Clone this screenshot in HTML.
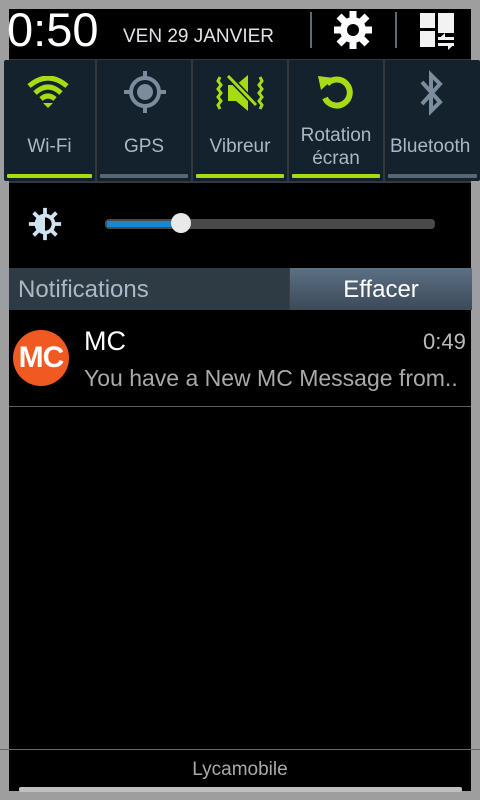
<!DOCTYPE html>
<html><head><meta charset="utf-8"><style>
*{margin:0;padding:0;box-sizing:border-box}
body{width:480px;height:800px;background:#9e9e9e;position:relative;overflow:hidden;font-family:"Liberation Sans",sans-serif}
.in{position:absolute;left:9px;top:9px;width:462px;height:782px;background:#000}
.abs{position:absolute}
.tiles{position:absolute;left:0;top:59px;width:480px;height:124px;background:rgba(150,160,170,0.35)}
.tile{position:absolute;top:1px;height:121px;background:#14222e;border-radius:2px}
.tile .lab{position:absolute;left:0;right:0;text-align:center;color:#a9b8c4;font-size:19px}
.tile .bar{position:absolute;left:3px;right:3px;top:114px;height:4px;border-radius:1px;background:#5a6670}
.tile .bar.on{background:#a6dc14}
</style></head><body>
<div class="in"></div>
<div class="abs" style="left:7px;top:4px;color:#fff;font-size:47px;line-height:52px">0:50</div>
<div class="abs" style="left:123px;top:26px;color:#dfe3e6;font-size:19px">VEN 29 JANVIER</div>
<div class="abs" style="left:310px;top:12px;width:2px;height:36px;background:#5a6a78"></div>
<div class="abs" style="left:395px;top:12px;width:2px;height:36px;background:#5a6a78"></div>
<svg class="abs" style="left:333px;top:9px" width="40" height="42" viewBox="0 0 40 42"><g fill="#fff"><circle cx="20" cy="21" r="13"/><g stroke="#fff" stroke-width="7"><line x1="20" y1="2" x2="20" y2="40"/><line x1="1" y1="21" x2="39" y2="21"/><line x1="6" y1="7" x2="34" y2="35"/><line x1="34" y1="7" x2="6" y2="35"/></g></g><circle cx="20" cy="21" r="6" fill="#000"/></svg>
<svg class="abs" style="left:419px;top:12px" width="38" height="38"><g fill="#f2f2f2"><rect x="1" y="1" width="15" height="15"/><rect x="19" y="1" width="16" height="20"/><rect x="1" y="19" width="15" height="16"/><path d="M19 25h16v3H19zM19 31h16v3H19z"/><path d="M26 21l-6 5.5 6 0zM29 38l6-5.5-6 0z"/></g></svg>
<div class="tiles">
 <div class="tile" style="left:4px;width:91px"><svg class="abs" style="left:22px;top:16px" width="44" height="32" viewBox="0 0 44 32"><g fill="none" stroke="#a6dc14" stroke-width="5"><path d="M3 10Q22-6 41 10"/><path d="M9 17Q22 5 35 17"/><path d="M15 23Q22 17 29 23"/></g><path d="M17 27L22 32 27 27Z" fill="#a6dc14"/></svg><div class="lab" style="top:76px">Wi-Fi</div><div class="bar on"></div></div>
 <div class="tile" style="left:97px;width:94px"><svg class="abs" style="left:26px;top:10px" width="44" height="44" viewBox="0 0 44 44"><circle cx="22" cy="22" r="14" fill="none" stroke="#7b8c9c" stroke-width="4"/><circle cx="22" cy="22" r="8" fill="#7b8c9c"/><g stroke="#7b8c9c" stroke-width="4"><line x1="22" y1="1" x2="22" y2="9"/><line x1="22" y1="35" x2="22" y2="43"/><line x1="1" y1="22" x2="9" y2="22"/><line x1="35" y1="22" x2="43" y2="22"/></g></svg><div class="lab" style="top:76px">GPS</div><div class="bar"></div></div>
 <div class="tile" style="left:193px;width:94px"><svg class="abs" style="left:23px;top:15px" width="48" height="36" viewBox="0 0 48 36"><g fill="#a6dc14"><path d="M12 10h8l12-10v36L20 26h-8z"/></g><g stroke="#a6dc14" stroke-width="3" fill="none"><path d="M4 2l-2 4 3 4-3 4 3 4-3 4 3 4-3 4 2 4"/><path d="M44 2l2 4-3 4 3 4-3 4 3 4-3 4 3 4-2 4"/></g><line x1="12" y1="1" x2="40" y2="30" stroke="#14222e" stroke-width="6"/><line x1="12" y1="1" x2="40" y2="30" stroke="#a6dc14" stroke-width="3"/></svg><div class="lab" style="top:76px">Vibreur</div><div class="bar on"></div></div>
 <div class="tile" style="left:289px;width:94px"><svg class="abs" style="left:28px;top:12px" width="40" height="40" viewBox="0 0 40 40"><path d="M10 12A13 13 0 1 1 8 26" fill="none" stroke="#a6dc14" stroke-width="6"/><path d="M1 4l16 2-13 12z" fill="#a6dc14"/></svg><div class="lab" style="top:64px;line-height:23px">Rotation<br>écran</div><div class="bar on"></div></div>
 <div class="tile" style="left:385px;width:95px"><svg class="abs" style="left:34px;top:10px" width="26" height="46" viewBox="0 0 26 46"><path d="M3 12L21 32 12 41V5l9 9L3 34" fill="none" stroke="#7b8c9c" stroke-width="4"/></svg><div class="lab" style="top:76px;left:5px;text-align:left">Bluetooth</div><div class="bar"></div></div>
</div>
<svg class="abs" style="left:27px;top:206px" width="36" height="36" viewBox="0 0 38 38"><g stroke="#cfe4f0" stroke-width="4"><line x1="19" y1="2" x2="19" y2="36"/><line x1="2" y1="19" x2="36" y2="19"/><line x1="7" y1="7" x2="31" y2="31"/><line x1="31" y1="7" x2="7" y2="31"/></g><circle cx="19" cy="19" r="11" fill="#cfe4f0"/><path d="M19 12A7 7 0 0 1 19 26Z" fill="#000"/></svg>
<div class="abs" style="left:105px;top:219px;width:330px;height:10px;border-radius:4px;background:#4a4a4a"></div>
<div class="abs" style="left:107px;top:221px;width:75px;height:6px;background:#1a86cf"></div>
<div class="abs" style="left:171px;top:213px;width:20px;height:20px;border-radius:50%;background:#e9e9e9"></div>
<div class="abs" style="left:0;top:268px;width:480px;height:42px;background:rgba(150,160,170,0.4)"></div>
<div class="abs" style="left:9px;top:268px;width:280px;height:42px;background:#2e3a44"></div>
<div class="abs" style="left:290px;top:268px;width:182px;height:42px;background:linear-gradient(#5c6f84,#3c4a58)"></div>
<div class="abs" style="left:18px;top:276px;color:#a8bac8;font-size:24px">Notifications</div>
<div class="abs" style="left:290px;top:276px;width:182px;text-align:center;color:#fff;font-size:24px">Effacer</div>
<div class="abs" style="left:13px;top:330px;width:56px;height:56px;border-radius:50%;background:#f05a22;color:#fff;font-weight:bold;font-size:30px;line-height:56px;text-align:center;letter-spacing:-1px">MC</div>
<div class="abs" style="left:84px;top:326px;color:#fff;font-size:27px">MC</div>
<div class="abs" style="left:423px;top:329px;color:#bbb;font-size:22px">0:49</div>
<div class="abs" style="left:84px;top:365px;color:#aaa;font-size:23px">You have a New MC Message from..</div>
<div class="abs" style="left:9px;top:406px;width:462px;height:1px;background:#555d66"></div>
<div class="abs" style="left:0;top:749px;width:480px;height:1px;background:#5e6a76"></div>
<div class="abs" style="left:0;top:759px;width:480px;text-align:center;color:#aaa;font-size:19px">Lycamobile</div>
<div class="abs" style="left:19px;top:787px;width:443px;height:5px;border-radius:2px;background:#c0c0c0"></div>
</body></html>
